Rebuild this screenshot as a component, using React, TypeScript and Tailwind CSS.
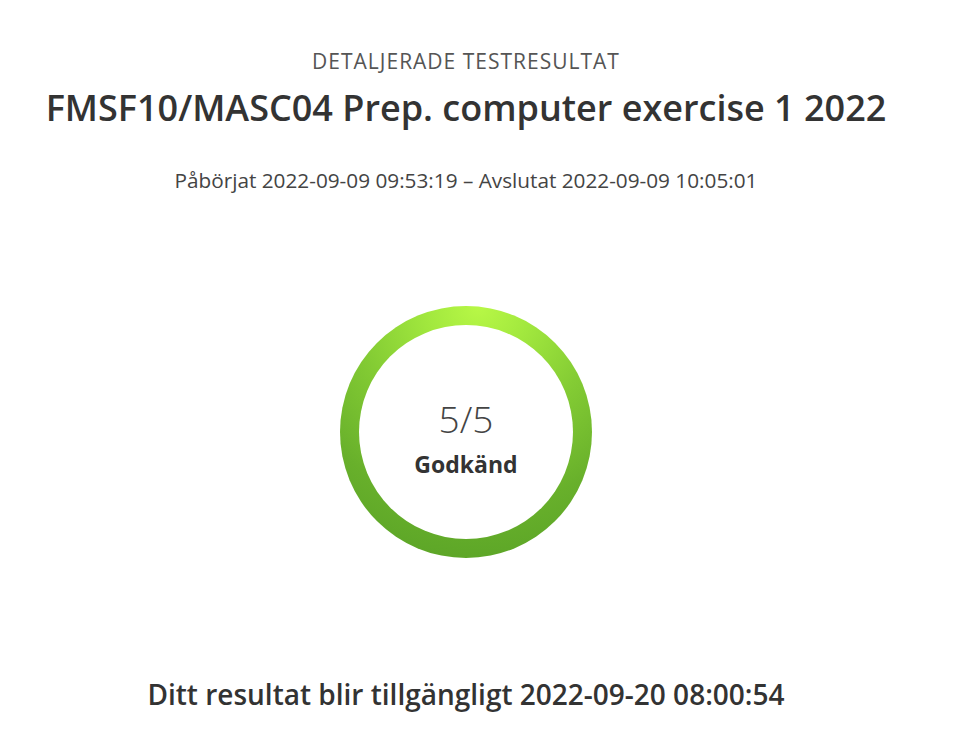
export default function App() {
  return (
    <div className="w-[955px] h-[733px] bg-white overflow-hidden" style={{ fontFamily: '"Open Sans", "Noto Sans", sans-serif' }}>
      <div className="w-[932px] flex flex-col items-center text-[#333]">
        <div className="mt-[47px] text-[21px] tracking-[1px] text-[#555] leading-[28px]">DETALJERADE TESTRESULTAT</div>
        <h1 className="mt-[9px] text-[36px] font-semibold leading-[48px] text-[#333]">FMSF10/MASC04 Prep. computer exercise 1 2022</h1>
        <div className="mt-[34px] text-[20.75px] leading-[28px] text-[#444]">Påbörjat 2022-09-09 09:53:19 – Avslutat 2022-09-09 10:05:01</div>
        <div className="mt-[112px] w-[252px] h-[252px] rounded-full p-[19px]" style={{ background: 'radial-gradient(circle at 55% 0%, #b8f846 0%, #a2e83e 18%, #84cc34 42%, #68b02b 70%, #56a025 100%)' }}>
          <div className="w-full h-full rounded-full bg-white flex flex-col items-center pt-[72px]">
            <div className="text-[37px] font-light leading-[44px] text-[#444]">5/5</div>
            <div className="text-[23px] font-bold leading-[30px] text-[#333] mt-[8px]">Godkänd</div>
          </div>
        </div>
        <div className="mt-[118px] text-[28px] font-semibold leading-[36px] text-[#333]">Ditt resultat blir tillgängligt 2022-09-20 08:00:54</div>
      </div>
    </div>
  );
}
